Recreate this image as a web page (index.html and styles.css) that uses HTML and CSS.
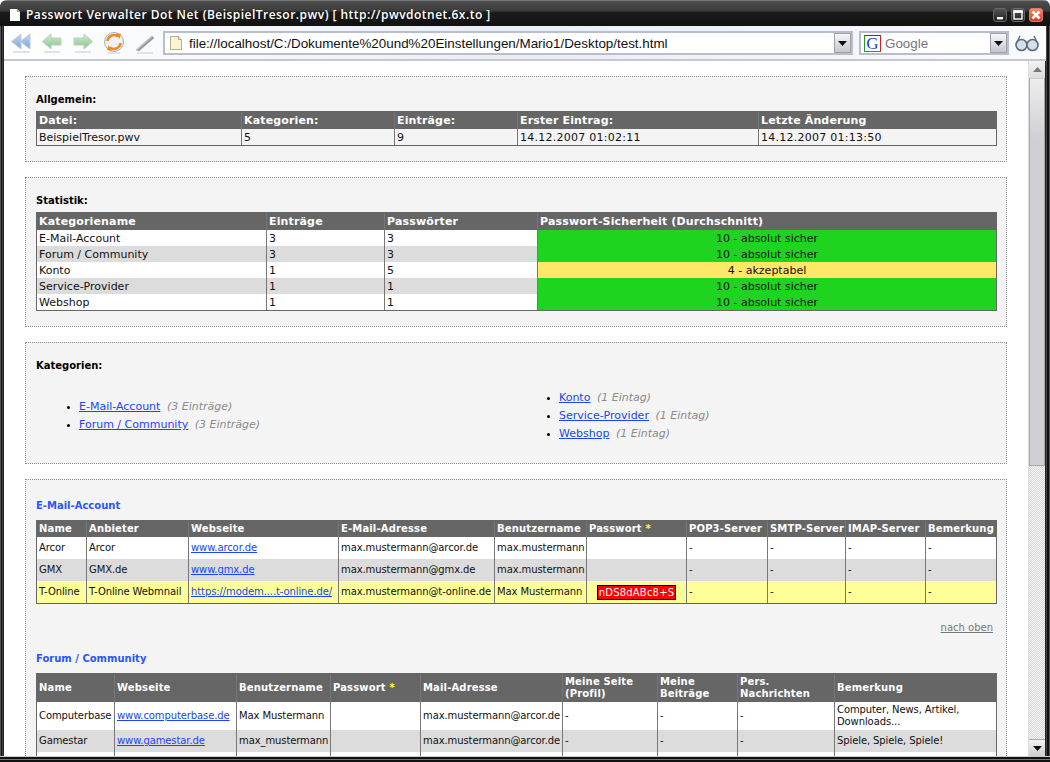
FILE: index.html
```html
<!DOCTYPE html>
<html lang="de">
<head>
<meta charset="utf-8">
<title>Passwort Verwalter Dot Net</title>
<link rel="stylesheet" href="styles.css">
</head>
<body>
<div class="window">
  <header class="titlebar">
    <svg class="doc-icon" width="12" height="14" viewBox="0 0 12 14"><path d="M1 1h7l3 3v9H1z" fill="#fff"/><path d="M8 1v3h3" fill="#aaa"/></svg>
    <span class="title">Passwort Verwalter Dot Net (BeispielTresor.pwv) [ http://pwvdotnet.6x.to ]</span>
    <div class="winbtns">
      <span class="winbtn"><svg width="12" height="12" viewBox="0 0 12 12"><rect x="3" y="8" width="6" height="2.400" fill="#fff"/></svg></span>
      <span class="winbtn"><svg width="12" height="12" viewBox="0 0 12 12"><rect x="2" y="2" width="8" height="8" fill="none" stroke="#fff" stroke-width="1.400"/><rect x="1.500" y="1.500" width="9" height="2.400" fill="#fff"/></svg></span>
      <span class="winbtn close"><svg width="12" height="12" viewBox="0 0 12 12"><path d="M2.500 2.500l7 7M9.500 2.500l-7 7" stroke="#fff" stroke-width="2.600"/></svg></span>
    </div>
  </header>
  <nav class="toolbar">
    <svg class="tool" width="22" height="24" viewBox="0 0 22 24">
      <defs>
        <linearGradient id="blue" x1="0" y1="0" x2="0" y2="1"><stop offset="0" stop-color="#c4d8f0"/><stop offset="1" stop-color="#7aa3dc"/></linearGradient>
        <linearGradient id="green" x1="0" y1="0" x2="0" y2="1"><stop offset="0" stop-color="#d2ecd0"/><stop offset="1" stop-color="#84c488"/></linearGradient>
      </defs>
      <path d="M11 3v15L1.500 10.500zM20 3v15l-9.500-7.500z" fill="url(#blue)" stroke="#c3cbd6"/>
      <path d="M3 21h17" stroke="#dfe2e8" stroke-width="2"/>
    </svg>
    <svg class="tool" width="22" height="24" viewBox="0 0 22 24">
      <path d="M10 3L1.500 10.500 10 18v-4h10V7H10z" fill="url(#green)" stroke="#c2c9c6"/>
      <path d="M3 21h16" stroke="#dfe2e8" stroke-width="2"/>
    </svg>
    <svg class="tool" width="22" height="24" viewBox="0 0 22 24">
      <path d="M12 3l8.500 7.500L12 18v-4H2V7h10z" fill="url(#green)" stroke="#c2c9c6"/>
      <path d="M3 21h16" stroke="#dfe2e8" stroke-width="2"/>
    </svg>
    <svg class="tool" width="22" height="24" viewBox="0 0 22 24">
      <circle cx="11" cy="11" r="9.500" fill="#eef0f3" stroke="#a9aeb6"/>
      <path d="M4.500 10A6.500 6.500 0 0 1 15 5.500" fill="none" stroke="#f08a1c" stroke-width="2.600"/>
      <path d="M13 2l5 1-1.500 5z" fill="#f08a1c"/>
      <path d="M17.500 12A6.500 6.500 0 0 1 7 16.500" fill="none" stroke="#f08a1c" stroke-width="2.600"/>
      <path d="M9 20l-5-1 1.500-5z" fill="#f08a1c"/>
      <path d="M5 22h12" stroke="#dfe2e8" stroke-width="2"/>
    </svg>
    <svg class="tool" width="22" height="24" viewBox="0 0 22 24">
      <path d="M2 19L18 5l2 2L5 20z" fill="#8d95a0" stroke="#a9afb8" stroke-width=".6"/>
      <path d="M3 19L18 6" stroke="#c6cad0" stroke-width="1"/>
      <path d="M3 22h16" stroke="#dfe2e8" stroke-width="2"/>
    </svg>
    <div class="field url">
      <svg class="page-icon" width="14" height="16" viewBox="0 0 14 16"><path d="M1.500 1.500h8l3 3v10h-11z" fill="#fbf3d3" stroke="#b9ae8e"/><path d="M9.500 1.500v3h3" fill="#e9dfbd" stroke="#b9ae8e"/></svg>
      <span class="url-text">file://localhost/C:/Dokumente%20und%20Einstellungen/Mario1/Desktop/test.html</span>
      <span class="drop"><svg width="9" height="5" viewBox="0 0 9 5"><path d="M0 0h9L4.500 5z" fill="#111"/></svg></span>
    </div>
    <div class="field search">
      <span class="g-box">G</span>
      <span class="search-text">Google</span>
      <span class="drop"><svg width="9" height="5" viewBox="0 0 9 5"><path d="M0 0h9L4.500 5z" fill="#111"/></svg></span>
    </div>
    <svg class="glasses" width="24" height="20" viewBox="0 0 24 20">
      <circle cx="6.500" cy="12" r="5.500" fill="#d5dfe8" stroke="#5b6c7c" stroke-width="1.600"/>
      <circle cx="17.500" cy="12" r="5.500" fill="#d5dfe8" stroke="#5b6c7c" stroke-width="1.600"/>
      <path d="M11 10q1-1 2 0M2 9l3-6M22 9l-3-6" fill="none" stroke="#5b6c7c" stroke-width="1.400"/>
    </svg>
  </nav>
  <div class="viewport">
    <main class="page">
      <section class="box">
        <h2 class="label">Allgemein:</h2>
        <table class="grid big">
          <colgroup><col class="g1"><col class="g2"><col class="g3"><col class="g4"><col class="g5"></colgroup>
          <tr class="head"><th>Datei:</th><th>Kategorien:</th><th>Einträge:</th><th>Erster Eintrag:</th><th>Letzte Änderung</th></tr>
          <tr><td>BeispielTresor.pwv</td><td>5</td><td>9</td><td class="num">14.12.2007 01:02:11</td><td class="num">14.12.2007 01:13:50</td></tr>
        </table>
      </section>
      <section class="box">
        <h2 class="label">Statistik:</h2>
        <table class="grid big">
          <colgroup><col class="s1"><col class="s2"><col class="s3"><col class="s4"></colgroup>
          <tr class="head"><th>Kategoriename</th><th>Einträge</th><th>Passwörter</th><th>Passwort-Sicherheit (Durchschnitt)</th></tr>
          <tr class="white"><td>E-Mail-Account</td><td>3</td><td>3</td><td class="safe">10 - absolut sicher</td></tr>
          <tr class="gray"><td>Forum / Community</td><td>3</td><td>3</td><td class="safe">10 - absolut sicher</td></tr>
          <tr class="white"><td>Konto</td><td>1</td><td>5</td><td class="ok">4 - akzeptabel</td></tr>
          <tr class="gray"><td>Service-Provider</td><td>1</td><td>1</td><td class="safe">10 - absolut sicher</td></tr>
          <tr class="white"><td>Webshop</td><td>1</td><td>1</td><td class="safe">10 - absolut sicher</td></tr>
        </table>
      </section>
      <section class="box">
        <h2 class="label">Kategorien:</h2>
        <div class="cats">
          <ul>
            <li><a href="#">E-Mail-Account</a> <em>(3 Einträge)</em></li>
            <li><a href="#">Forum / Community</a> <em>(3 Einträge)</em></li>
          </ul>
          <ul>
            <li><a href="#">Konto</a> <em>(1 Eintag)</em></li>
            <li><a href="#">Service-Provider</a> <em>(1 Eintag)</em></li>
            <li><a href="#">Webshop</a> <em>(1 Eintag)</em></li>
          </ul>
        </div>
      </section>
      <section class="box detail">
        <h3 class="cat-title">E-Mail-Account</h3>
        <table class="grid small mail">
          <colgroup><col class="m1"><col class="m2"><col class="m3"><col class="m4"><col class="m5"><col class="m6"><col class="m7"><col class="m8"><col class="m9"><col class="m10"></colgroup>
          <tr class="head"><th>Name</th><th>Anbieter</th><th>Webseite</th><th>E-Mail-Adresse</th><th>Benutzername</th><th>Passwort <span class="star">*</span></th><th>POP3-Server</th><th>SMTP-Server</th><th>IMAP-Server</th><th>Bemerkung</th></tr>
          <tr class="white"><td>Arcor</td><td>Arcor</td><td><a href="#">www.arcor.de</a></td><td>max.mustermann@arcor.de</td><td>max.mustermann</td><td></td><td>-</td><td>-</td><td>-</td><td>-</td></tr>
          <tr class="gray"><td>GMX</td><td>GMX.de</td><td><a href="#">www.gmx.de</a></td><td>max.mustermann@gmx.de</td><td>max.mustermann</td><td></td><td>-</td><td>-</td><td>-</td><td>-</td></tr>
          <tr class="yellow"><td>T-Online</td><td>T-Online Webmnail</td><td><a href="#">https://modem....t-online.de/</a></td><td>max.mustermann@t-online.de</td><td>Max Mustermann</td><td class="pw-cell"><span class="pw">nDS8dABc8+S</span></td><td>-</td><td>-</td><td>-</td><td>-</td></tr>
        </table>
        <p class="top-link"><a href="#">nach oben</a></p>
        <h3 class="cat-title">Forum / Community</h3>
        <table class="grid small forum">
          <colgroup><col class="f1"><col class="f2"><col class="f3"><col class="f4"><col class="f5"><col class="f6"><col class="f7"><col class="f8"><col class="f9"></colgroup>
          <tr class="head"><th>Name</th><th>Webseite</th><th>Benutzername</th><th>Passwort <span class="star">*</span></th><th>Mail-Adresse</th><th>Meine Seite<br>(Profil)</th><th>Meine<br>Beiträge</th><th>Pers.<br>Nachrichten</th><th>Bemerkung</th></tr>
          <tr class="white"><td>Computerbase</td><td><a href="#">www.computerbase.de</a></td><td>Max Mustermann</td><td></td><td>max.mustermann@arcor.de</td><td>-</td><td>-</td><td>-</td><td>Computer, News, Artikel,<br>Downloads...</td></tr>
          <tr class="gray"><td>Gamestar</td><td><a href="#">www.gamestar.de</a></td><td>max_mustermann</td><td></td><td>max.mustermann@arcor.de</td><td>-</td><td>-</td><td>-</td><td>Spiele, Spiele, Spiele!</td></tr>
          <tr class="white last"><td></td><td><a href="#">http://www.de</a></td><td></td><td></td><td></td><td></td><td></td><td></td><td></td></tr>
        </table>
      </section>
    </main>
    <aside class="scrollbar">
      <span class="sb-btn"><svg width="9" height="5" viewBox="0 0 9 5"><path d="M0 5h9L4.500 0z" fill="#777"/></svg></span>
      <span class="sb-thumb"></span>
      <span class="sb-track"></span>
      <span class="sb-btn dark"><svg width="9" height="5" viewBox="0 0 9 5"><path d="M0 0h9L4.500 5z" fill="#111"/></svg></span>
    </aside>
  </div>
  <div class="frame-bottom"></div>
</div>
</body>
</html>
```
FILE: styles.css
```css
* { box-sizing: border-box; }
html, body { margin: 0; padding: 0; height: 100%; background: #fff; overflow: hidden; }
body { font-family: "DejaVu Sans", Verdana, sans-serif; font-size: 10px; color: #111; }
.window {
  height: 762px; width: 1050px; display: flex; flex-direction: column; overflow: hidden;
  border-radius: 7px 7px 0 0;
  background: linear-gradient(to right, #555 0 1px, #111 1px 2px, #444 2px 3px, #222 3px 4px, #fff 4px 1045px, #222 1045px 1046px, #444 1046px 1047px, #111 1047px 1049px, #555 1049px);
}
.titlebar {
  height: 26px; flex: none; display: flex; align-items: center; padding: 3px 7px 0 9px;
  background: linear-gradient(to bottom, #777 0 1px, #4e4e4e 1px, #3c3c3c 11px, #1c1c1c 12px, #111 26px);
}
.doc-icon { margin-right: 5px; }
.title { font-family: "Open Sans", sans-serif; font-weight: 600; font-size: 12px; color: #fff; letter-spacing: 0.47px; white-space: nowrap; }
.winbtns { margin-left: auto; display: flex; gap: 4px; }
.winbtn { width: 14px; height: 14px; border-radius: 3px; border: 1px solid #666; background: linear-gradient(#555, #222); display: flex; align-items: center; justify-content: center; overflow: hidden; }
.winbtn svg { flex: none; }
.winbtn.close { border-color: #d77; background: linear-gradient(#f98a5d, #d8391c); }
.toolbar {
  height: 35px; flex: none; margin: 0 4px 0 4px; display: flex; align-items: center; padding: 1px 7px 0 6px;
  background: linear-gradient(to right, #fff, #e9edf4 50%, #fafbfd); border-bottom: 2px solid #c3c8d2;
}
.tool { flex: none; margin-right: 9px; }
.tool:nth-of-type(5) { margin-right: 7px; }
.field { height: 24px; display: flex; align-items: center; background: #fff; border: 2px solid #b8bfcb; }
.url { flex: 1; padding-left: 4px; }
.page-icon { flex: none; margin-right: 6px; }
.url-text { font-family: "Liberation Sans", Arial, sans-serif; font-size: 13.4px; color: #111; white-space: nowrap; }
.drop { margin-left: auto; width: 17px; height: 20px; flex: none; display: flex; align-items: center; justify-content: center; background: linear-gradient(#f6f6f8, #c6c7cd); border: 1px solid #a0a0a8; }
.search { width: 150px; margin-left: 6px; padding-left: 3px; flex: none; }
.g-box { width: 17px; height: 17px; flex: none; font-family: "Liberation Serif", serif; font-size: 17px; line-height: 15px; text-align: center; color: #1a3fc0; border: 1px solid; border-color: #1a3fc0 #c22 #2a9a2a #2a9a2a; }
.search-text { margin-left: 4px; font-family: "Liberation Sans", Arial, sans-serif; font-size: 13.4px; color: #777; }
.glasses { flex: none; margin-left: 6px; }

.viewport { flex: 1; min-height: 0; display: flex; margin: 0 5px 0 4px; overflow: hidden; background: #fff; }
.page { flex: 1; min-width: 0; overflow: hidden; padding: 15px 21px 0; display: flex; flex-direction: column; gap: 15px; }
.box { flex: none; background: #f4f4f4; border: 1px dotted #8a8a8a; padding: 17px 9px 15px 10px; }
.label { margin: 0 0 5px; font-size: 10px; line-height: 12px; font-weight: bold; color: #000; }
.grid { width: 961px; border-collapse: separate; border-spacing: 0; table-layout: fixed; border: 1px solid #666; }
.grid th, .grid td { padding: 0 2px; border-left: 1px solid #777; white-space: nowrap; text-align: left; font-weight: normal; overflow: hidden; line-height: 12px; }
.grid tr > :first-child { border-left: 0; }
.head th { background: #666; color: #fff; font-weight: bold; letter-spacing: 0.15px; }
.big .head th { font-size: 11px; height: 17px; padding-left: 2px; }
.big td { height: 16px; font-size: 11px; padding-top: 1px; }
.big td.num { letter-spacing: 0.25px; }
.small td { letter-spacing: -0.1px; }
.small .head th { height: 16px; }
.mail td { height: 22px; }
.forum .head th { height: 28px; }
.forum td { height: 22px; }
.forum tr:nth-child(2) td { height: 28px; }
.forum .last td { height: 18px; }
.white td { background: #fff; }
.gray td { background: #dcdcdc; }
.yellow td { background: #ffff99; }
.grid td.safe { background: #1ed41e; text-align: center; }
.grid td.ok { background: #ffe768; text-align: center; }
.star { color: #ffff33; }
.pw-cell { text-align: center !important; }
.pw { display: inline-block; background: #f00; color: #fff; border: 1px solid #000; padding: 0 1px; line-height: 13px; letter-spacing: 0.2px; }
a { color: #1a44ff; }
.cats { display: grid; grid-template-columns: 480px 1fr; align-items: center; margin-top: 17px; padding-bottom: 5px; }
.cats ul { margin: 0; padding: 0 0 0 43px; list-style: none; font-size: 11px; }
.cats li { line-height: 18px; position: relative; }
.cats li::before { content: ""; position: absolute; left: -12px; top: 8px; width: 3px; height: 3px; border-radius: 50%; background: #000; }
.cats em { color: #8a8a8a; margin-left: 3px; }
.detail { padding-top: 20px; padding-bottom: 0; flex: 1; }
.cat-title { margin: 0 0 8px; font-size: 10px; line-height: 12px; font-weight: bold; color: #2a55ff; }
.top-link { margin: 18px 4px 19px 0; text-align: right; line-height: 12px; }
.top-link a { color: #777; }

.g1 { width: 204px; } .g2 { width: 153px; } .g3 { width: 123px; } .g4 { width: 241px; } .g5 { width: 238px; }
.s1 { width: 229px; } .s2 { width: 118px; } .s3 { width: 153px; } .s4 { width: 459px; }
.m1 { width: 49px; } .m2 { width: 102px; } .m3 { width: 150px; } .m4 { width: 156px; } .m5 { width: 92px; } .m6 { width: 100px; } .m7 { width: 81px; } .m8 { width: 78px; } .m9 { width: 80px; } .m10 { width: 71px; }
.f1 { width: 77px; } .f2 { width: 122px; } .f3 { width: 94px; } .f4 { width: 90px; } .f5 { width: 142px; } .f6 { width: 95px; } .f7 { width: 80px; } .f8 { width: 97px; } .f9 { width: 162px; }

.scrollbar { width: 17px; flex: none; display: flex; flex-direction: column; border-left: 1px solid #ddd;
  background: repeating-conic-gradient(#d8d8d8 0 25%, #f4f4f4 0 50%) 0 0 / 2px 2px; }
.sb-btn { height: 17px; flex: none; display: flex; align-items: center; justify-content: center; background: linear-gradient(#f2f2f2, #dcdcdc); }
.sb-btn.dark { background: linear-gradient(#f4f4f4, #cfcfd4); border-top: 1px solid #aaa; }
.sb-thumb { height: 388px; flex: none; background: linear-gradient(#ededed, #cfcfd4 60px, #cfcfd4); border: 1px solid #a8a8a8; border-top-color: #ccc; }
.sb-track { flex: 1; }
.frame-bottom { height: 6px; flex: none; background: linear-gradient(to bottom, #ccc 0 1px, #111 1px 3px, #777 3px 4px, #111 4px); }
```
